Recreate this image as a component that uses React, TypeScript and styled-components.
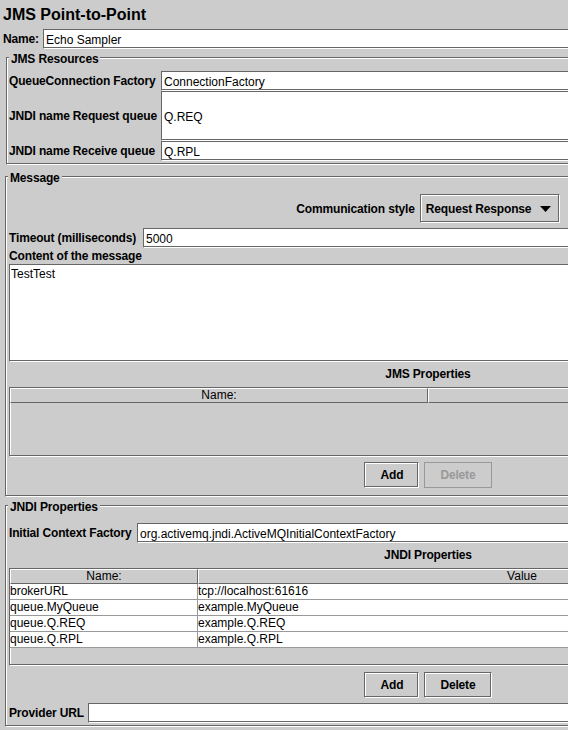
import React from 'react';
import styled, { createGlobalStyle, css } from 'styled-components';

const GlobalStyle = createGlobalStyle`
  html, body {
    margin: 0;
    padding: 0;
    overflow: hidden;
    background: #cccccc;
  }
  body {
    font-family: "Liberation Sans", Arial, sans-serif;
    font-size: 12px;
    color: #000000;
  }
`;

// Metal look: dark outline with a white highlight one pixel in
const etched = css`
  box-sizing: border-box;
  border: 1px solid;
  border-color: #666666 #ffffff #ffffff #666666;
  box-shadow: inset -1px -1px 0 #666666, inset 1px 1px 0 #ffffff;
`;

const Frame = styled.div`
  width: 856px;
  display: flex;
  flex-direction: column;
`;

const Title = styled.h1`
  margin: 0;
  height: 29px;
  line-height: 29px;
  padding-left: 3px;
  font-size: 16px;
  font-weight: bold;
  white-space: nowrap;
`;

const Label = styled.label`
  font-weight: bold;
  letter-spacing: -0.15px;
  white-space: nowrap;
`;

const FieldRow = styled.div<{ $labelWidth: number; $indent?: number; $top?: number }>`
  display: grid;
  grid-template-columns: ${p => p.$labelWidth}px 1fr;
  align-items: center;
  height: 20px;
  margin-top: ${p => p.$top ?? 0}px;
  padding-left: ${p => p.$indent ?? 0}px;
  padding-right: ${p => p.$indent ?? 0}px;
`;

const TextField = styled.div<{ $height?: number }>`
  ${etched}
  height: ${p => p.$height ?? 20}px;
  background: #ffffff;
  padding: 1px 0 0 2px;
  display: flex;
  align-items: center;
  white-space: nowrap;
  overflow: hidden;
`;

const TextArea = styled.div<{ $height: number }>`
  ${etched}
  height: ${p => p.$height}px;
  background: #ffffff;
  padding: 2px 1px 0;
  line-height: 15px;
  white-space: pre;
  overflow: hidden;
`;

const Group = styled.section<{ $inner?: boolean; $top: number; $bottom: number }>`
  ${etched}
  position: relative;
  margin: ${p => p.$top}px 5px 0 ${p => (p.$inner ? 6 : 5)}px;
  padding: ${p => (p.$inner ? 13 : 17)}px 3px ${p => p.$bottom}px ${p => (p.$inner ? 2 : 3)}px;
  display: flex;
  flex-direction: column;
`;

const GroupTitle = styled.span`
  position: absolute;
  top: -6px;
  left: 2px;
  padding: 0 2px;
  line-height: 14px;
  background: #cccccc;
  font-weight: bold;
  letter-spacing: -0.15px;
`;

const ResourceGrid = styled.div`
  display: grid;
  grid-template-columns: 150px 1fr;
  column-gap: 2px;
  align-items: center;
`;

const CenterRow = styled.div<{ $height: number; $top?: number }>`
  display: flex;
  justify-content: center;
  align-items: center;
  gap: 5px;
  height: ${p => p.$height}px;
  margin-top: ${p => p.$top ?? 0}px;
`;

const Combo = styled.div`
  ${etched}
  width: 140px;
  height: 29px;
  padding: 0 8px 0 5px;
  background: #cccccc;
  display: flex;
  align-items: center;
  justify-content: space-between;
  font-weight: bold;
  letter-spacing: -0.15px;
  white-space: nowrap;
`;

const Caption = styled.div`
  height: 16px;
  line-height: 16px;
  font-weight: bold;
  letter-spacing: -0.15px;
`;

const SectionLabel = styled.div`
  height: 25px;
  line-height: 25px;
  text-align: center;
  font-weight: bold;
  letter-spacing: -0.15px;
`;

const Table = styled.div<{ $height: number }>`
  ${etched}
  height: ${p => p.$height}px;
  background: #cccccc;
  display: flex;
  flex-direction: column;
  overflow: hidden;
`;

const HeaderRow = styled.div<{ $cols: string }>`
  display: grid;
  grid-template-columns: ${p => p.$cols};
  height: 15px;
  flex-shrink: 0;
`;

const HeaderCell = styled.div`
  box-sizing: border-box;
  border-top: 1px solid #ffffff;
  border-left: 1px solid #ffffff;
  border-bottom: 1px solid #666666;
  border-right: 1px solid #666666;
  line-height: 13px;
  text-align: center;
  white-space: nowrap;
  overflow: hidden;
`;

const BodyRow = styled.div<{ $cols: string }>`
  display: grid;
  grid-template-columns: ${p => p.$cols};
  height: 16px;
  flex-shrink: 0;
  background: #ffffff;
`;

const Cell = styled.div`
  box-sizing: border-box;
  border-bottom: 1px solid #999999;
  border-right: 1px solid #999999;
  line-height: 15px;
  white-space: nowrap;
  overflow: hidden;
`;

const Button = styled.button`
  ${etched}
  height: 26px;
  padding: 0 15px;
  background: #cccccc;
  color: #000000;
  font-family: "Liberation Sans", Arial, sans-serif;
  font-size: 12px;
  font-weight: bold;
  letter-spacing: -0.15px;

  &:disabled {
    border-color: #999999;
    box-shadow: none;
    color: #999999;
  }
`;

const Arrow = () => (
  <svg width="11" height="6" viewBox="0 0 11 6">
    <polygon points="0,0 11,0 5.5,6" fill="#000000" />
  </svg>
);

const jndiRows = [
  ['brokerURL', 'tcp://localhost:61616'],
  ['queue.MyQueue', 'example.MyQueue'],
  ['queue.Q.REQ', 'example.Q.REQ'],
  ['queue.Q.RPL', 'example.Q.RPL'],
];

const App = () => {
  return (
    <Frame>
      <GlobalStyle />
      <Title>JMS Point-to-Point</Title>

      <FieldRow $labelWidth={40} $indent={3}>
        <Label>Name:</Label>
        <TextField>Echo Sampler</TextField>
      </FieldRow>

      <Group $inner $top={8} $bottom={3}>
        <GroupTitle>JMS Resources</GroupTitle>
        <ResourceGrid>
          <Label>QueueConnection Factory</Label>
          <TextField>ConnectionFactory</TextField>
          <Label>JNDI name Request queue</Label>
          <TextField $height={50}>Q.REQ</TextField>
          <Label>JNDI name Receive queue</Label>
          <TextField>Q.RPL</TextField>
        </ResourceGrid>
      </Group>

      <Group $top={11} $bottom={8}>
        <GroupTitle>Message</GroupTitle>
        <CenterRow $height={29}>
          <Label>Communication style</Label>
          <Combo>
            Request Response
            <Arrow />
          </Combo>
        </CenterRow>
        <FieldRow $labelWidth={134} $top={5}>
          <Label>Timeout (milliseconds)</Label>
          <TextField>5000</TextField>
        </FieldRow>
        <Caption>Content of the message</Caption>
        <TextArea $height={98}>TestTest</TextArea>
        <SectionLabel>JMS Properties</SectionLabel>
        <Table $height={70}>
          <HeaderRow $cols="1fr 1fr">
            <HeaderCell>Name:</HeaderCell>
            <HeaderCell />
          </HeaderRow>
        </Table>
        <CenterRow $height={26} $top={5}>
          <Button>Add</Button>
          <Button disabled>Delete</Button>
        </CenterRow>
      </Group>

      <Group $top={8} $bottom={3}>
        <GroupTitle>JNDI Properties</GroupTitle>
        <FieldRow $labelWidth={128}>
          <Label>Initial Context Factory</Label>
          <TextField>org.activemq.jndi.ActiveMQInitialContextFactory</TextField>
        </FieldRow>
        <SectionLabel>JNDI Properties</SectionLabel>
        <Table $height={98}>
          <HeaderRow $cols="188px 1fr">
            <HeaderCell>Name:</HeaderCell>
            <HeaderCell>Value</HeaderCell>
          </HeaderRow>
          {jndiRows.map(([name, value]) => (
            <BodyRow key={name} $cols="188px 1fr">
              <Cell>{name}</Cell>
              <Cell>{value}</Cell>
            </BodyRow>
          ))}
        </Table>
        <CenterRow $height={26} $top={6}>
          <Button>Add</Button>
          <Button>Delete</Button>
        </CenterRow>
        <FieldRow $labelWidth={79} $top={5}>
          <Label>Provider URL</Label>
          <TextField />
        </FieldRow>
      </Group>
    </Frame>
  );
};

export default App;
